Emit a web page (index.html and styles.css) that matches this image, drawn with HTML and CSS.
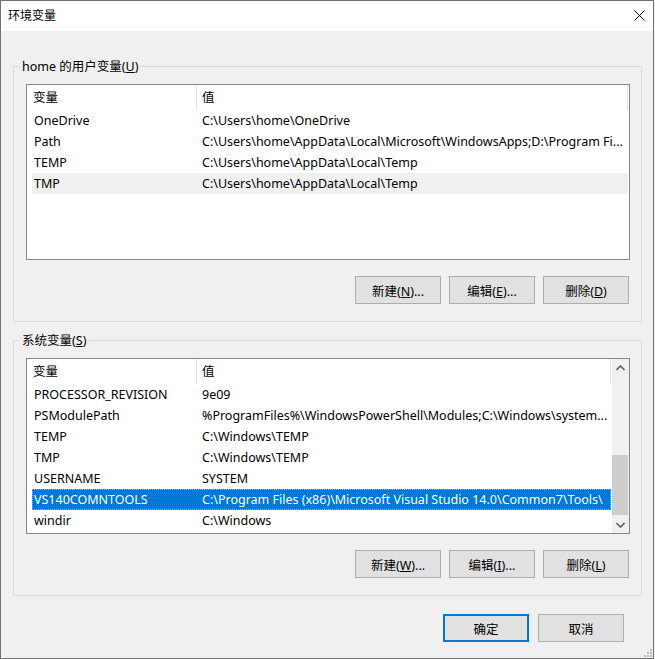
FILE: index.html
```html
<!DOCTYPE html>
<html lang="zh-CN">
<head>
    <meta charset="UTF-8">
    <title>环境变量</title>
    <link rel="stylesheet" href="styles.css">
</head>
<body>
<div class="window">
    <div class="titlebar">
        <span class="title">环境变量</span>
        <svg class="close" width="11" height="11" viewBox="0 0 11 11">
            <path d="M0.5 0.5 L10.5 10.5 M10.5 0.5 L0.5 10.5" stroke="#000" stroke-width="1" fill="none"/>
        </svg>
    </div>

    <div class="content">
        <fieldset class="group">
            <legend>home 的用户变量(<u>U</u>)</legend>
            <div class="listview">
                <div class="lv-main">
                    <div class="lv-header">
                        <div class="hcell name">变量</div>
                        <div class="hcell value">值</div>
                    </div>
                    <div class="row"><span class="cell name">OneDrive</span><span class="cell value">C:\Users\home\OneDrive</span></div>
                    <div class="row"><span class="cell name">Path</span><span class="cell value">C:\Users\home\AppData\Local\Microsoft\WindowsApps;D:\Program Fi...</span></div>
                    <div class="row"><span class="cell name">TEMP</span><span class="cell value">C:\Users\home\AppData\Local\Temp</span></div>
                    <div class="row selected-inactive"><span class="cell name">TMP</span><span class="cell value">C:\Users\home\AppData\Local\Temp</span></div>
                </div>
            </div>
            <div class="buttons">
                <button class="btn">新建(<u>N</u>)...</button>
                <button class="btn">编辑(<u>E</u>)...</button>
                <button class="btn">删除(<u>D</u>)</button>
            </div>
        </fieldset>

        <fieldset class="group system">
            <legend>系统变量(<u>S</u>)</legend>
            <div class="listview">
                <div class="lv-main">
                    <div class="lv-header">
                        <div class="hcell name">变量</div>
                        <div class="hcell value">值</div>
                    </div>
                    <div class="row"><span class="cell name">PROCESSOR_REVISION</span><span class="cell value">9e09</span></div>
                    <div class="row"><span class="cell name">PSModulePath</span><span class="cell value">%ProgramFiles%\WindowsPowerShell\Modules;C:\Windows\system...</span></div>
                    <div class="row"><span class="cell name">TEMP</span><span class="cell value">C:\Windows\TEMP</span></div>
                    <div class="row"><span class="cell name">TMP</span><span class="cell value">C:\Windows\TEMP</span></div>
                    <div class="row"><span class="cell name">USERNAME</span><span class="cell value">SYSTEM</span></div>
                    <div class="row selected"><span class="cell name">VS140COMNTOOLS</span><span class="cell value">C:\Program Files (x86)\Microsoft Visual Studio 14.0\Common7\Tools\</span></div>
                    <div class="row"><span class="cell name">windir</span><span class="cell value">C:\Windows</span></div>
                </div>
                <div class="scrollbar">
                    <div class="sb-arrow">
                        <svg width="9" height="6" viewBox="0 0 9 6"><path d="M0.5 5 L4.5 1 L8.5 5" stroke="#606060" stroke-width="1.6" fill="none"/></svg>
                    </div>
                    <div class="sb-track"><div class="sb-thumb"></div></div>
                    <div class="sb-arrow">
                        <svg width="9" height="6" viewBox="0 0 9 6"><path d="M0.5 1 L4.5 5 L8.5 1" stroke="#606060" stroke-width="1.6" fill="none"/></svg>
                    </div>
                </div>
            </div>
            <div class="buttons">
                <button class="btn">新建(<u>W</u>)...</button>
                <button class="btn">编辑(<u>I</u>)...</button>
                <button class="btn">删除(<u>L</u>)</button>
            </div>
        </fieldset>

        <div class="footer">
            <button class="btn default">确定</button>
            <button class="btn">取消</button>
        </div>
    </div>

    <svg class="grip" width="9" height="9" viewBox="0 0 9 9">
        <rect x="7" y="1" width="2" height="2" fill="#bcbcbc"/>
        <rect x="4" y="4" width="2" height="2" fill="#bcbcbc"/>
        <rect x="7" y="4" width="2" height="2" fill="#bcbcbc"/>
        <rect x="1" y="7" width="2" height="2" fill="#bcbcbc"/>
        <rect x="4" y="7" width="2" height="2" fill="#bcbcbc"/>
        <rect x="7" y="7" width="2" height="2" fill="#bcbcbc"/>
    </svg>
</div>
</body>
</html>
```

FILE: styles.css
```css
body {
    margin: 0;

    background-color: #f0f0f0;
}

.window {
    position: relative;

    display: flex;
    flex-direction: column;

    box-sizing: border-box;
    width: 654px;
    height: 659px;

    font-family: "Noto Sans", "Noto Sans CJK SC", sans-serif;
    font-size: 12.5px;
    color: #000;

    border: 1px solid #727272;
    background-color: #f0f0f0;
}

.titlebar {
    display: flex;
    align-items: center;
    justify-content: space-between;

    height: 30px;
    padding: 0 8px 0 7px;

    font-size: 12px;

    background-color: #fff;
}

.title {
    line-height: 30px;
}

.close {
    margin-top: -1px;
}

.content {
    padding: 27px 0 0 12px;
}

.group {
    box-sizing: border-box;
    width: 629px;
    margin: 0;
    padding: 9px 11px 17px 12px;

    border: 1px solid #dcdcdc;
}

.group.system {
    margin-top: 10px;
}

.group legend {
    margin-left: -6px;
    padding: 0 2px;

    line-height: 17px;
}

.listview {
    display: flex;

    box-sizing: border-box;
    height: 176px;

    border: 1px solid #828790;
    background-color: #fff;
}

.lv-main {
    flex: 1;

    min-width: 0;
}

.lv-header {
    display: flex;

    height: 25px;
    margin-right: 1px;

    line-height: 25px;
}

.hcell.name {
    box-sizing: border-box;
    width: 170px;
    padding-left: 6px;

    border-right: 1px solid #e5e5e5;
}

.hcell.value {
    flex: 1;

    padding-left: 5px;

    border-right: 1px solid #e5e5e5;
}

.row {
    display: flex;

    height: 21px;
    margin: 0 1px 0 5px;

    line-height: 21px;
    white-space: nowrap;
}

.cell {
    overflow: hidden;
}

.cell.name {
    box-sizing: border-box;
    width: 170px;
    padding-left: 2px;
}

.cell.value {
    flex: 1;
}

.row.selected-inactive {
    background-color: #f0f0f0;
}

.row.selected {
    color: #fff;

    outline: 1px dotted #f2a23c;
    outline-offset: -1px;
    background-color: #0078d7;
}

.scrollbar {
    display: flex;
    flex-direction: column;

    width: 17px;

    background-color: #f0f0f0;
}

.sb-arrow {
    display: flex;
    align-items: center;
    justify-content: center;

    height: 17px;
}

.sb-track {
    flex: 1;
}

.sb-thumb {
    width: 16px;
    height: 60px;
    margin-top: 79px;

    background-color: #cdcdcd;
}

.buttons {
    display: flex;
    justify-content: flex-end;
    gap: 8px;

    margin-top: 16px;
    padding-right: 1px;
}

.btn {
    box-sizing: border-box;
    width: 86px;
    height: 28px;
    padding: 0;

    font-family: inherit;
    font-size: 12.5px;
    color: #000;

    border: 1px solid #adadad;
    background-color: #e1e1e1;
}

.btn.default {
    border: 2px solid #0078d7;
}

.footer {
    display: flex;
    justify-content: flex-end;
    gap: 9px;

    margin-top: 18px;
    padding-right: 29px;
}

.grip {
    position: absolute;
    right: 1px;
    bottom: 1px;
}
```
